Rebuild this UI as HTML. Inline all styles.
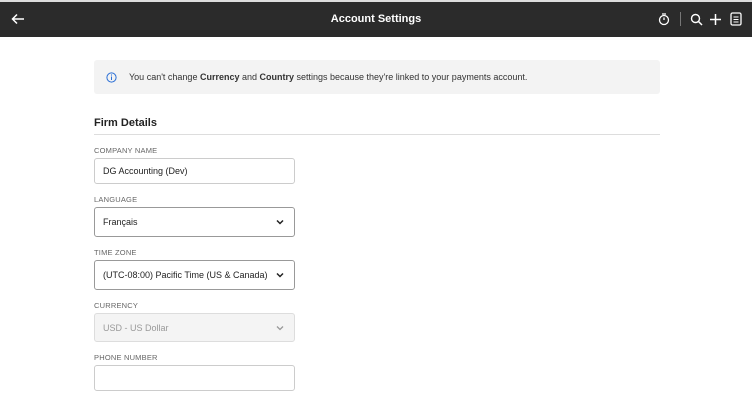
<!DOCTYPE html><html><head><style>
*{box-sizing:border-box;margin:0;padding:0}
body{width:752px;height:412px;background:#fff;font-family:"Liberation Sans",sans-serif;position:relative;overflow:hidden;color:#222}
.hdr{position:absolute;left:0;top:2px;width:752px;height:35px;background:#2b2b2b;color:#fff}
.title{position:absolute;left:0;right:0;top:11px;text-align:center;font-size:11px;font-weight:bold}
.note{position:absolute;left:94px;top:60px;width:566px;height:34px;background:#f3f3f3;border-radius:3px;font-size:9px;color:#333}
.note span.t{position:absolute;left:35px;top:12px}
h2{position:absolute;left:94px;top:117px;font-size:11px;font-weight:bold;color:#222}
.line{position:absolute;left:94px;top:134px;width:566px;height:1px;background:#ddd}
.lbl{position:absolute;left:94px;font-size:7.5px;color:#666;letter-spacing:.2px}
.in{position:absolute;left:94px;width:201px;border:1px solid #ccc;border-radius:3px;font-size:9px;padding-left:8px;display:flex;align-items:center;color:#222}
.sel{border-color:#999}
.chev{position:absolute;right:10px;top:50%;margin-top:-3px}
</style></head><body>
<div style="position:absolute;left:0;top:0;width:752px;height:2px;background:#ddd"></div>
<div class="hdr">
<svg style="position:absolute;left:11px;top:11px" width="14" height="12" viewBox="0 0 14 12"><path d="M13 6H2M6 1.5L1.5 6L6 10.5" stroke="#fff" stroke-width="1.5" fill="none"/></svg>
<div class="title">Account Settings</div>
<svg style="position:absolute;left:658px;top:10px" width="12" height="14" viewBox="0 0 12 14"><circle cx="6" cy="8" r="4.5" stroke="#fff" stroke-width="1.3" fill="none"/><path d="M4 2h4M6 5.5V8" stroke="#fff" stroke-width="1.3"/></svg>
<div style="position:absolute;left:680px;top:10px;width:1px;height:14px;background:#777"></div>
<svg style="position:absolute;left:690px;top:11px" width="13" height="13" viewBox="0 0 13 13"><circle cx="5.5" cy="5.5" r="4" stroke="#fff" stroke-width="1.4" fill="none"/><path d="M8.5 8.5L12 12" stroke="#fff" stroke-width="1.5"/></svg>
<svg style="position:absolute;left:709px;top:11px" width="13" height="13" viewBox="0 0 13 13"><path d="M6.5 1v11M1 6.5h11" stroke="#fff" stroke-width="1.5"/></svg>
<svg style="position:absolute;left:730px;top:10px" width="12" height="14" viewBox="0 0 12 14"><rect x="1" y="1" width="10" height="12" rx="1.5" stroke="#fff" stroke-width="1.3" fill="none"/><path d="M3.5 5h5M3.5 7.5h5M3.5 10h5" stroke="#fff" stroke-width="1.1"/></svg>
</div>
<div class="note">
<svg style="position:absolute;left:12px;top:12px" width="11" height="11" viewBox="0 0 11 11"><circle cx="5.5" cy="5.5" r="4.6" stroke="#2a6fd6" stroke-width="1" fill="none"/><path d="M5.5 4.5v3.5" stroke="#2a6fd6" stroke-width="1"/><circle cx="5.5" cy="3" r=".6" fill="#2a6fd6"/></svg>
<span class="t">You can't change <b>Currency</b> and <b>Country</b> settings because they're linked to your payments account.</span></div>
<h2>Firm Details</h2><div class="line"></div>
<div class="lbl" style="top:146px">COMPANY NAME</div>
<div class="in" style="top:158px;height:26px">DG Accounting (Dev)</div>
<div class="lbl" style="top:195px">LANGUAGE</div>
<div class="in sel" style="top:207px;height:30px">Français<svg class="chev" width="8" height="6" viewBox="0 0 8 6"><path d="M1 1.5L4 4.5L7 1.5" stroke="#222" stroke-width="1.5" fill="none"/></svg></div>
<div class="lbl" style="top:248px">TIME ZONE</div>
<div class="in sel" style="top:260px;height:30px">(UTC-08:00) Pacific Time (US &amp; Canada)<svg class="chev" width="8" height="6" viewBox="0 0 8 6"><path d="M1 1.5L4 4.5L7 1.5" stroke="#222" stroke-width="1.5" fill="none"/></svg></div>
<div class="lbl" style="top:301px">CURRENCY</div>
<div class="in" style="top:313px;height:29px;background:#f4f4f4;border-color:#ddd;color:#999">USD - US Dollar<svg class="chev" width="8" height="6" viewBox="0 0 8 6"><path d="M1 1.5L4 4.5L7 1.5" stroke="#999" stroke-width="1.3" fill="none"/></svg></div>
<div class="lbl" style="top:353px">PHONE NUMBER</div>
<div class="in" style="top:365px;height:26px"></div>
</body></html>
